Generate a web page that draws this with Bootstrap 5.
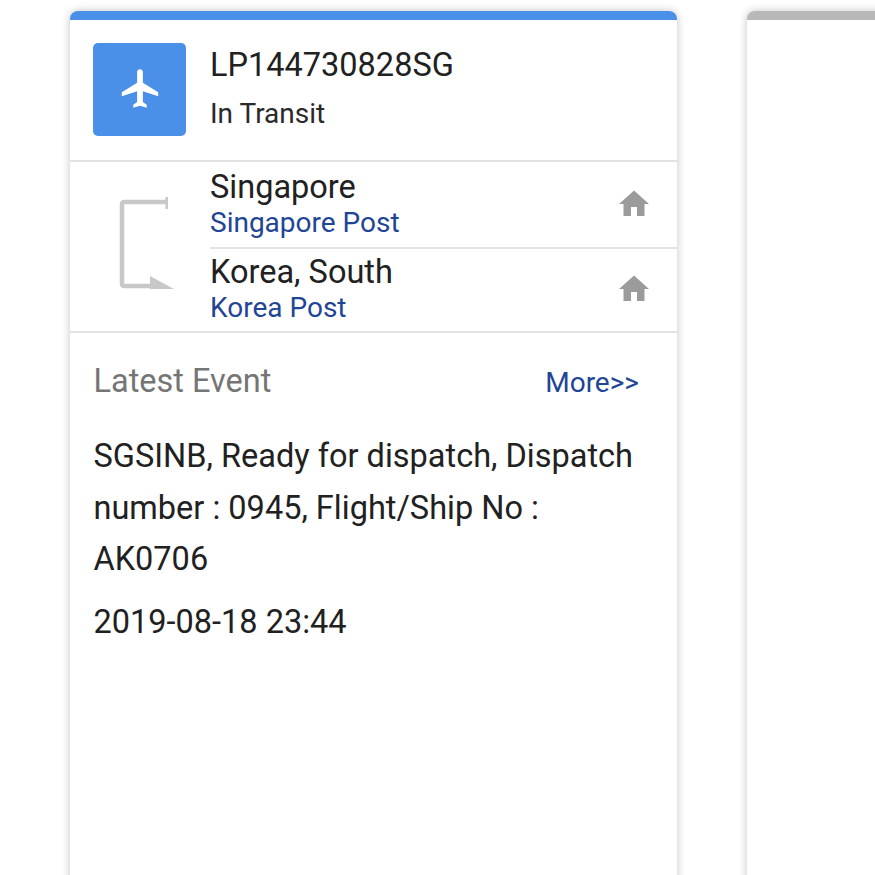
<!DOCTYPE html>
<html lang="en">
<head>
<meta charset="utf-8">
<title>Tracking</title>
<link href="https://cdn.jsdelivr.net/npm/bootstrap@5.3.0/dist/css/bootstrap.min.css" rel="stylesheet">
<style>
html,body{height:875px;overflow:hidden;background:#fff}
body{font-family:Roboto,"Liberation Sans",sans-serif;color:#212121}
.stage{height:875px;padding:11px 0 0 70px;gap:70px;overflow:hidden;width:875px}
.pkg{flex:0 0 607px;height:900px;background:#fff;border-radius:8px 8px 0 0;border-top:9px solid #4a90e8;box-shadow:0 0 8px rgba(0,0,0,.24)}
.pkg-off{border-top-color:#b8b8b8}
.head{height:142px;padding:23px 0 0 23px;border-bottom:2px solid #e2e2e2}
.tile{width:93px;height:93px;background:#4a90e8;border-radius:5px}
.head-txt{margin-left:24px}
.num{font-size:32.5px;line-height:44px}
.stat{font-size:28px;line-height:32px;margin-top:11px;color:#2a2a2a}
.route{height:171px;border-bottom:2px solid #e2e2e2}
.route-ic{width:140px}
.stop{height:85px;padding:0 25px 2px 0}
.stop+.stop{border-top:2px solid #e2e2e2;padding-bottom:4px}
.place{font-size:32.5px;line-height:36px}
.carrier{font-size:28px;line-height:32px;color:#1f4595;margin-top:2px}
.evt{padding:26px 38px 0 23.5px}
.evt-t{font-size:32.5px;line-height:44px;color:#757575}
.more{font-size:28px;color:#1f4595;line-height:48px;text-decoration:none}
.evt-b{font-size:32.5px;line-height:51.500px;margin-top:24px}
.evt-d{font-size:32.5px;line-height:44px;margin-top:14px}
</style>
</head>
<body>
<div class="d-flex stage">
  <div class="pkg">
    <div class="head d-flex">
      <div class="tile d-flex align-items-center justify-content-center">
        <svg width="46" height="46" viewBox="0 0 24 24" fill="#fff"><path d="M21 16v-2l-8-5V3.500C13 2.670 12.330 2 11.500 2S10 2.670 10 3.500V9l-8 5v2l8-2.500V19l-2 1.500V22l3.500-1 3.500 1v-1.500L13 19v-5.500l8 2.500z" transform="translate(.5 -.8)"/></svg>
      </div>
      <div class="head-txt">
        <div class="num">LP144730828SG</div>
        <div class="stat">In Transit</div>
      </div>
    </div>
    <div class="route d-flex">
      <div class="route-ic">
        <svg width="140" height="170" viewBox="0 0 140 170" fill="none"><path d="M97 40H54a2 2 0 0 0-2 2v80a2 2 0 0 0 2 2h30" stroke="#c8c8c8" stroke-width="4.500"/><path d="M95.500 35h2.500v12h-2.500z" fill="#c8c8c8"/><path d="M80 114l24 13H80z" fill="#c8c8c8"/></svg>
      </div>
      <div class="flex-grow-1">
        <div class="stop d-flex justify-content-between align-items-center">
          <div><div class="place">Singapore</div><div class="carrier">Singapore Post</div></div>
          <svg width="36" height="36" viewBox="0 0 24 24" fill="#9b9b9b"><path d="M10 20v-6h4v6h5v-8h3L12 3 2 12h3v8z"/></svg>
        </div>
        <div class="stop d-flex justify-content-between align-items-center">
          <div><div class="place">Korea, South</div><div class="carrier">Korea Post</div></div>
          <svg width="36" height="36" viewBox="0 0 24 24" fill="#9b9b9b"><path d="M10 20v-6h4v6h5v-8h3L12 3 2 12h3v8z"/></svg>
        </div>
      </div>
    </div>
    <div class="evt">
      <div class="d-flex justify-content-between">
        <div class="evt-t">Latest Event</div>
        <a class="more" href="#">More&gt;&gt;</a>
      </div>
      <div class="evt-b">SGSINB, Ready for dispatch, Dispatch number : 0945, Flight/Ship No : AK0706</div>
      <div class="evt-d">2019-08-18 23:44</div>
    </div>
  </div>
  <div class="pkg pkg-off"></div>
</div>
<script src="https://cdn.jsdelivr.net/npm/bootstrap@5.3.0/dist/js/bootstrap.bundle.min.js"></script>
</body>
</html>
